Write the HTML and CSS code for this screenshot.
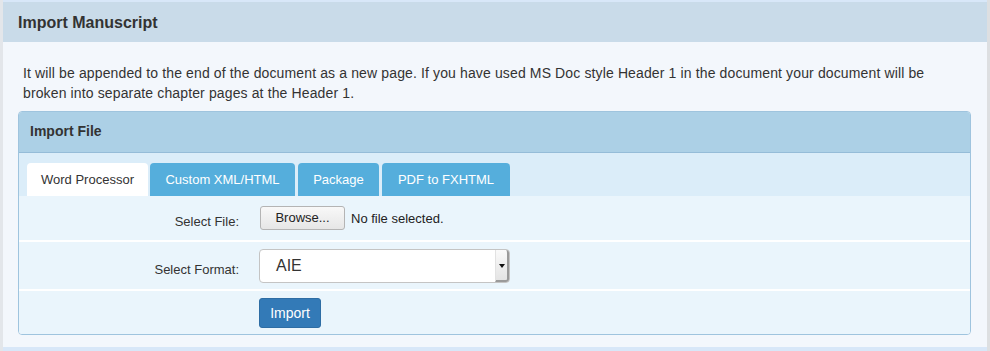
FILE: index.html
```html
<!DOCTYPE html>
<html lang="en">
<head>
    <meta charset="UTF-8">
    <title>Import Manuscript</title>
    <link rel="stylesheet" href="styles.css">
</head>
<body>

    <div class="frame">
        <div class="panel">
            <div class="panel-heading">Import Manuscript</div>
            <div class="panel-body">
                <p class="intro">It will be appended to the end of the document as a new page. If you have used MS Doc style Header 1 in the document your document will be broken into separate chapter pages at the Header 1.</p>

                <div class="box">
                    <div class="box-heading">Import File</div>

                    <ul class="tabs">
                        <li class="tab active tab-word">Word Processor</li>
                        <li class="tab tab-custom">Custom XML/HTML</li>
                        <li class="tab tab-package">Package</li>
                        <li class="tab tab-pdf">PDF to FXHTML</li>
                    </ul>

                    <div class="form-row row-file">
                        <label>Select File:</label>
                        <div class="field">
                            <span class="browse">Browse...</span>
                            <span class="no-file">No file selected.</span>
                        </div>
                    </div>

                    <div class="form-row row-format">
                        <label>Select Format:</label>
                        <div class="field">
                            <div class="select">
                                <span class="select-value">AIE</span>
                                <span class="select-arrow"></span>
                            </div>
                        </div>
                    </div>

                    <div class="form-row row-submit">
                        <span></span>
                        <div class="field">
                            <button class="btn-import">Import</button>
                        </div>
                    </div>
                </div>
            </div>
        </div>
    </div>

</body>
</html>
```

FILE: styles.css
```css
body {
    margin: 0;
    background-color: #d8e7f8;
    font-family: "Liberation Sans", Arial, sans-serif;
    color: #333;
}
.frame {
    padding-top: 2px;
    padding-bottom: 5px;
    border-left: 3px solid #e3e6ea;
    border-right: 3px solid #dddfe1;
}
.panel {
    background-color: #f3f7fc;
}
.panel-heading {
    background-color: #c9dbe9;
    height: 40px;
    line-height: 42px;
    padding-left: 15px;
    font-size: 16px;
    font-weight: bold;
}
.panel-body {
    padding: 22px 15px 12px 15px;
    margin-right: 1px;
}
.intro {
    margin: 0 0 8px 5px;
    font-size: 14px;
    line-height: 19.5px;
    letter-spacing: 0.13px;
}
.box {
    border: 1px solid #9fc4de;
    border-radius: 4px;
    overflow: hidden;
    background-color: #ffffff;
}
.box-heading {
    background-color: #acd0e6;
    border-bottom: 1px solid #95bcd8;
    height: 40px;
    line-height: 38px;
    padding-left: 11px;
    font-size: 14px;
    font-weight: bold;
}
.tabs {
    list-style: none;
    margin: 0;
    padding: 10px 8px 0 8px;
    background-color: #dbedf9;
    display: flex;
    gap: 3px;
    height: 33px;
}
.tab {
    background-color: #55aedc;
    color: #fff;
    font-size: 13px;
    line-height: 34px;
    text-align: center;
    border-radius: 4px 4px 0 0;
}
.tab.active {
    background-color: #fff;
    color: #333;
    margin-right: -1px;
}
.tab-word { width: 121px; }
.tab-custom { width: 145px; }
.tab-package { width: 81px; }
.tab-pdf { width: 128px; }
.form-row {
    display: grid;
    grid-template-columns: 220px 1fr;
    column-gap: 20px;
    align-items: center;
    background-color: #eaf5fc;
    font-size: 13px;
}
.form-row label {
    text-align: right;
}
.row-file {
    height: 44px;
    border-bottom: 2px solid #fff;
}
.row-file label {
    padding-top: 6px;
}
.row-format {
    height: 47px;
    border-bottom: 2px solid #fff;
}
.row-format label {
    padding-top: 8px;
}
.row-submit {
    height: 43px;
}
.field {
    display: flex;
    align-items: center;
}
.browse {
    display: inline-block;
    margin-left: 1px;
    width: 83px;
    height: 22px;
    line-height: 22px;
    text-align: center;
    border: 1px solid #b4b4b4;
    border-radius: 3px;
    background: linear-gradient(#f8f8f8, #e6e6e6);
    color: #222;
}
.no-file {
    margin-left: 6px;
    color: #222;
}
.select {
    position: relative;
    width: 249px;
    height: 32px;
    border: 1px solid #c4c4c4;
    border-radius: 4px;
    background-color: #fff;
}
.select-value {
    display: block;
    padding-left: 16px;
    line-height: 32px;
    font-size: 16px;
}
.select-arrow {
    position: absolute;
    right: 0;
    top: 0;
    bottom: 0;
    width: 11px;
    border-left: 1px solid #e2e2e2;
    border-right: 2px solid #9a9a9a;
    border-bottom: 2px solid #9a9a9a;
    border-radius: 0 3px 3px 0;
    background: linear-gradient(#fafafa, #e4e4e4);
}
.select-arrow::after {
    content: "";
    position: absolute;
    left: 3px;
    top: 14px;
    border-left: 3px solid transparent;
    border-right: 3px solid transparent;
    border-top: 4px solid #111;
}
.btn-import {
    width: 62px;
    height: 30px;
    padding: 0;
    border: 1px solid #2e6da4;
    border-radius: 3px;
    background-color: #337ab7;
    color: #fff;
    font-family: "Liberation Sans", Arial, sans-serif;
    font-size: 14px;
}
```
